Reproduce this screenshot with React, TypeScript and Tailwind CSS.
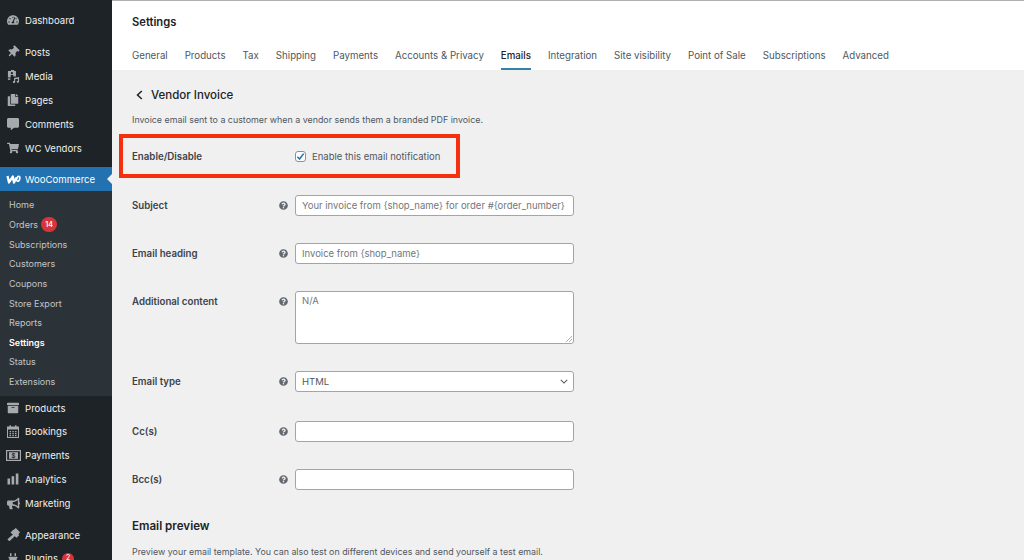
import React from "react";
import { FaTachometerAlt, FaThumbtack, FaCopy, FaCommentAlt, FaShoppingCart, FaArchive, FaBullhorn, FaPlug, FaQuestionCircle } from "react-icons/fa";

const Media = () => (
  <svg viewBox="0 0 14 14" className="w-[13px] h-[13px]" fill="currentColor">
    <path d="M1 1h3l.6-1h2.8L8 1h1.6v6H6.8V5.500H4V8H1z" />
    <circle cx="5.300" cy="3.400" r="1.200" fill="#1d2327" />
    <path d="M7.600 8.600 13 7.600v5a1.300 1.100 0 1 1-1.200-1.100V9.400l-3 .6v3a1.300 1.100 0 1 1-1.200-1.100z" />
    <path d="M1 9h2.600v1.600H1z" />
  </svg>
);
const Pay = () => (
  <svg viewBox="0 0 15 11" className="w-[15px] h-[11px]">
    <rect x="0.600" y="0.600" width="13.800" height="9.800" fill="none" stroke="currentColor" strokeWidth="1.200" />
    <rect x="3" y="2.200" width="9" height="6.600" fill="currentColor" />
    <text x="7.500" y="7.600" fontSize="6" textAnchor="middle" fill="#1d2327" fontWeight="700" fontFamily="Inter, sans-serif">$</text>
  </svg>
);
const Bars = () => (
  <svg viewBox="0 0 12 12" className="w-[12px] h-[12px]" fill="currentColor">
    <rect x="0.500" y="5.500" width="2.600" height="6" />
    <rect x="4.600" y="3.200" width="2.600" height="8.300" />
    <rect x="8.800" y="0.500" width="2.600" height="11" />
  </svg>
);
const Woo = () => (
  <svg viewBox="0 0 15 9" className="w-[15px] h-[9px]" fill="none" stroke="#fff" strokeWidth="2.300" strokeLinejoin="round">
    <path d="M1.500 1 3 7.500 6.800 1.500 8 7.500 10.500 2.500" />
    <ellipse cx="12.200" cy="3.800" rx="1.500" ry="2.500" transform="rotate(15 12.200 3.800)" strokeWidth="1.700" />
  </svg>
);
const Calendar = () => (
  <svg viewBox="0 0 12 13" className="w-[12px] h-[13px]">
    <rect x="0.500" y="2" width="11" height="10.500" fill="none" stroke="currentColor" />
    <rect x="0.500" y="2" width="11" height="2.500" fill="currentColor" />
    <rect x="2.500" y="0.300" width="1.500" height="2.500" fill="currentColor" />
    <rect x="8" y="0.300" width="1.500" height="2.500" fill="currentColor" />
    <path d="M2.500 6h1.500v1.200H2.500zM5.300 6h1.500v1.200H5.300zM8 6h1.500v1.200H8zM2.500 8h1.500v1.200H2.500zM5.300 8h1.500v1.200H5.300zM8 8h1.500v1.200H8zM2.500 10h1.500v1.200H2.500zM5.300 10h1.500v1.200H5.300zM8 10h1.500v1.200H8z" fill="currentColor" />
  </svg>
);
const Brush = () => (
  <svg viewBox="0 0 13 13" className="w-[13px] h-[13px]" fill="currentColor">
    <path d="M7 1.500 8.800 0 13 4.300 11.500 6 12 7.500 9.500 9.800 3.500 4.500 5.500 2.500z" />
    <path d="M6.500 6 8.200 7.800 3 12.800C2 13.300.200 12 .7 10.900z" />
  </svg>
);

const Top = ({ icon, label, active, badge, mt, tall }: { icon: React.ReactNode; label: string; active?: boolean; badge?: string; mt?: string; tall?: boolean }) => (
  <div className={`relative flex items-center shrink-0 ${tall ? "h-[24px]" : "h-[23.8px]"} ${mt ?? ""} ${active ? "bg-[#2271b1] text-white" : "text-[#eef0f1]"}`}>
    <span className={`w-[25px] flex justify-center pl-[1px] text-[12px] ${active ? "text-white" : "text-[#a7aaad]"}`}>{icon}</span>
    <span className="text-[9.6px] leading-none pt-[1px]">{label}</span>
    {badge && <span className="ml-[4px] w-[12px] h-[12px] rounded-full bg-[#d63638] text-white text-[7px] flex items-center justify-center">{badge}</span>}
    {active && <span className="absolute right-0 top-[7px] w-0 h-0 border-y-[5px] border-y-transparent border-r-[5px] border-r-[#f0f0f1]" />}
  </div>
);

const Sub = ({ label, bold, badge }: { label: string; bold?: boolean; badge?: string }) => (
  <div className={`flex items-center h-[19.65px] pl-[9px] text-[9px] leading-none shrink-0 ${bold ? "font-semibold text-white" : "text-[#c3c4c7]"}`}>
    <span>{label}</span>
    {badge && <span className="ml-[3px] px-[4px] h-[15px] w-[16px] rounded-full bg-[#d63638] text-white text-[7px] font-semibold flex items-center justify-center">{badge}</span>}
  </div>
);

const Help = () => <FaQuestionCircle className="text-[#646970] text-[9px] shrink-0" />;

const Row = ({ label, h, mb, children, top }: { label: string; h: string; mb: string; children: React.ReactNode; top?: boolean }) => (
  <div className={`flex ${h} ${mb} ${top ? "items-start" : "items-center"}`}>
    <div className={`w-[147px] text-[9.7px] font-semibold text-[#3c434a] ${top ? "pt-[4px]" : "pt-[1px]"}`}>{label}</div>
    <div className={`w-[16px] flex ${top ? "pt-[6px]" : ""}`}><Help /></div>
    {children}
  </div>
);

const Input = ({ text }: { text?: string }) => (
  <div className="w-[279px] h-full bg-white border border-[#a0a5aa] rounded-[3px] px-[6px] pt-[1px] flex items-center text-[9.5px] text-[#72777c] whitespace-nowrap overflow-hidden">{text}</div>
);

const tabs = ["General", "Products", "Tax", "Shipping", "Payments", "Accounts & Privacy", "Emails", "Integration", "Site visibility", "Point of Sale", "Subscriptions", "Advanced"];

export default function App() {
  return (
    <div className="flex w-[1024px] h-[560px] overflow-hidden bg-[#f0f0f1]" style={{ fontFamily: "Inter, 'Noto Sans', sans-serif" }}>
      <aside className="w-[112px] shrink-0 bg-[#1d2327] flex flex-col pt-[8px]">
        <Top tall icon={<FaTachometerAlt />} label="Dashboard" />
        <Top tall icon={<FaThumbtack className="rotate-45" />} label="Posts" mt="mt-[8px]" />
        <Top tall icon={<Media />} label="Media" />
        <Top tall icon={<FaCopy />} label="Pages" />
        <Top tall icon={<FaCommentAlt />} label="Comments" />
        <Top tall icon={<FaShoppingCart />} label="WC Vendors" />
        <Top tall icon={<Woo />} label="WooCommerce" active mt="mt-[7px]" />
        <div className="bg-[#2c3338] flex flex-col h-[205px] shrink-0 pt-[4px]">
          <Sub label="Home" />
          <Sub label="Orders" badge="14" />
          <Sub label="Subscriptions" />
          <Sub label="Customers" />
          <Sub label="Coupons" />
          <Sub label="Store Export" />
          <Sub label="Reports" />
          <Sub label="Settings" bold />
          <Sub label="Status" />
          <Sub label="Extensions" />
        </div>
        <Top icon={<FaArchive />} label="Products" />
        <Top icon={<Calendar />} label="Bookings" />
        <Top icon={<Pay />} label="Payments" />
        <Top icon={<Bars />} label="Analytics" />
        <Top icon={<FaBullhorn className="text-[13px]" />} label="Marketing" />
        <Top icon={<Brush />} label="Appearance" mt="mt-[8px]" />
        <Top icon={<FaPlug />} label="Plugins" badge="2" />
      </aside>
      <main className="flex-1 flex flex-col min-w-0">
        <header className="h-[70px] shrink-0 bg-white border-t border-[#b0b0b0] px-[20px] flex flex-col">
          <h1 className="text-[11.200px] font-semibold text-[#1d2327] leading-none pt-[16px] h-[44px]">Settings</h1>
          <nav className="flex gap-[17px] text-[9.700px] text-[#50575e] h-[25px]">
            {tabs.map((t) => (
              <span key={t} className={`whitespace-nowrap pt-[4px] ${t === "Emails" ? "font-medium text-[#1d2327] border-b-[2px] border-[#3582a8]" : ""}`}>{t}</span>
            ))}
          </nav>
        </header>
        <div className="px-[20px] pt-[17px] flex flex-col">
          <div className="flex items-center h-[16px]">
            <svg viewBox="0 0 7 10" className="w-[7px] h-[10px] ml-[4px] mr-[8px]"><path d="M5.800 1 1.500 5l4.300 4" fill="none" stroke="#1d2327" strokeWidth="1.500" /></svg>
            <h2 className="text-[11.500px] font-medium text-[#1d2327] pt-[1px]">Vendor Invoice</h2>
          </div>
          <p className="text-[8.900px] text-[#50575e] mt-[10px] h-[14px] leading-[14px]">Invoice email sent to a customer when a vendor sends them a branded PDF invoice.</p>
          <div className="flex items-center -ml-[13px] w-[341px] h-[44px] mt-[7px] mb-[17px] border-[4px] border-[#f4300f] pl-[9px]">
            <div className="w-[163px] text-[9.700px] font-semibold text-[#3c434a] pt-[2px]">Enable/Disable</div>
            <span className="w-[11px] h-[11px] bg-white border border-[#8c8f94] rounded-[3px] flex items-center justify-center">
              <svg viewBox="0 0 10 10" className="w-[9px] h-[9px]"><path d="M1.500 5.200 4 7.800 8.500 1.800" fill="none" stroke="#2271b1" strokeWidth="1.700" /></svg>
            </span>
            <span className="ml-[6px] text-[9.500px] text-[#50575e] pt-[2px]">Enable this email notification</span>
          </div>
          <Row label="Subject" h="h-[21px]" mb="mb-[27px]"><Input text="Your invoice from {shop_name} for order #{order_number}" /></Row>
          <Row label="Email heading" h="h-[21px]" mb="mb-[27px]"><Input text="Invoice from {shop_name}" /></Row>
          <Row label="Additional content" h="h-[53px]" mb="mb-[27px]" top>
            <div className="relative w-[279px] h-full bg-white border border-[#a0a5aa] rounded-[3px] px-[6px] pt-[2px] text-[9.500px] text-[#72777c]">
              N/A
              <svg viewBox="0 0 6 6" className="absolute right-[1px] bottom-[1px] w-[6px] h-[6px]"><path d="M0 6 6 0M3 6l3-3" stroke="#8c8f94" strokeWidth=".7" /></svg>
            </div>
          </Row>
          <Row label="Email type" h="h-[21px]" mb="mb-[29px]">
            <div className="w-[279px] h-full bg-white border border-[#a0a5aa] rounded-[3px] pl-[6px] pr-[5px] flex items-center justify-between text-[9.500px] text-[#50575e]">
              <span className="pt-[1px]">HTML</span>
              <svg viewBox="0 0 10 6" className="w-[8px] h-[5px]"><path d="M1 1l4 4 4-4" fill="none" stroke="#50575e" strokeWidth="1.300" /></svg>
            </div>
          </Row>
          <Row label="Cc(s)" h="h-[21px]" mb="mb-[27px]"><Input /></Row>
          <Row label="Bcc(s)" h="h-[21px]" mb="mb-[28px]"><Input /></Row>
          <h3 className="text-[11.600px] font-semibold text-[#1d2327] h-[16px] leading-[16px]">Email preview</h3>
          <p className="text-[8.900px] text-[#50575e] mt-[11px] whitespace-nowrap">Preview your email template. You can also test on different devices and send yourself a test email.</p>
        </div>
      </main>
    </div>
  );
}
